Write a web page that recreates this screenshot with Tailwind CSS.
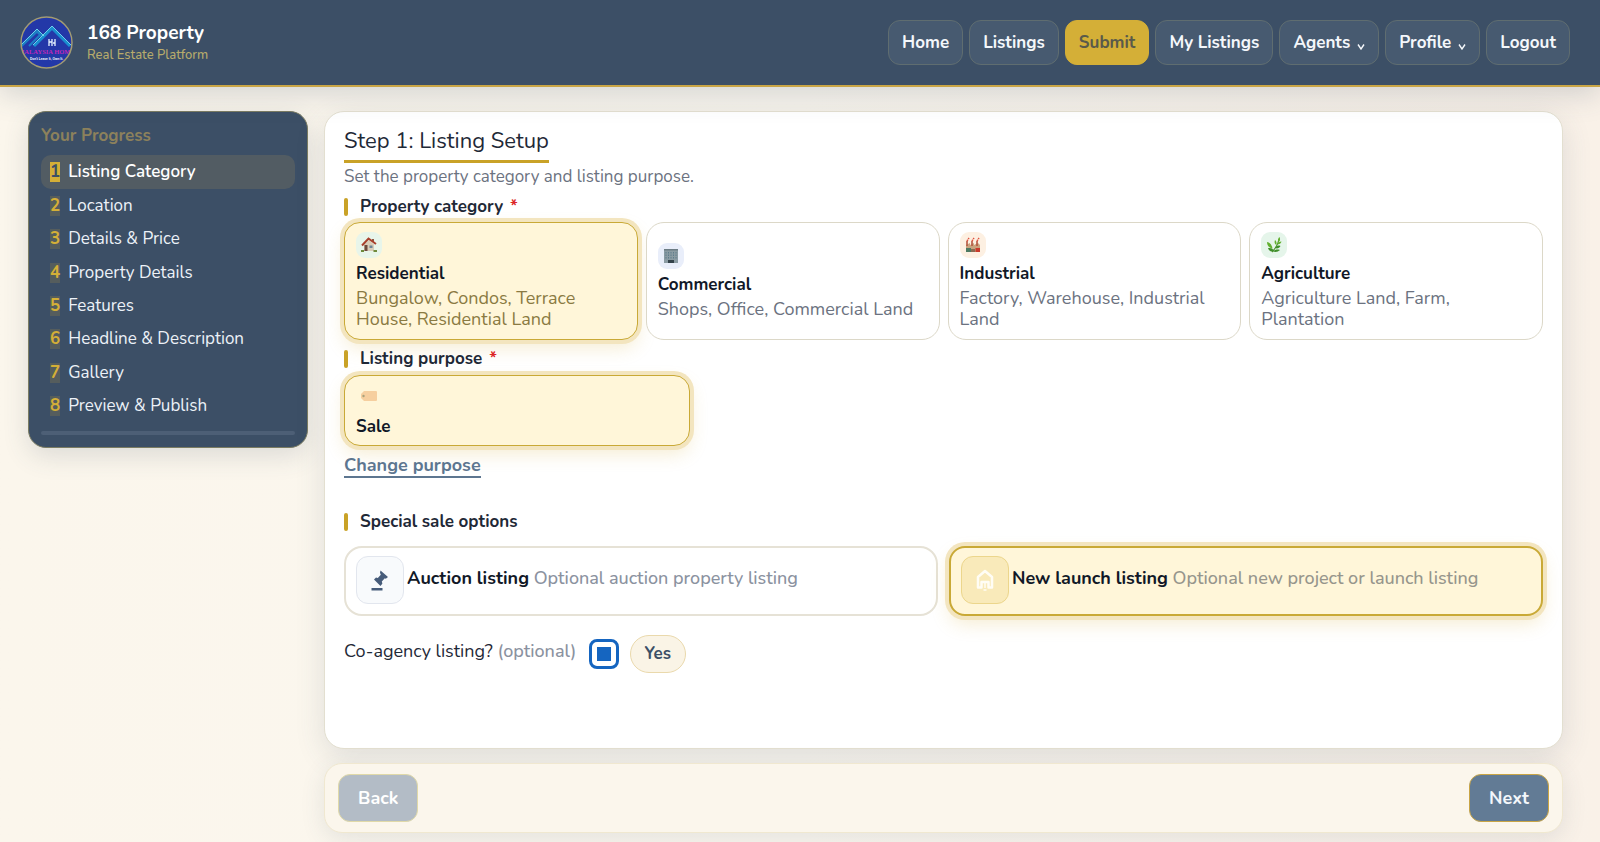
<!DOCTYPE html>
<html lang="en">
  <head>
    <meta charset="UTF-8" />
    <meta name="viewport" content="width=device-width, initial-scale=1.0" />
    <title>Submit Listing - 168 Property</title>
    <script src="https://cdn.jsdelivr.net/npm/@tailwindcss/browser@4"></script>
  </head>
  <body
    class="min-h-screen bg-linear-to-r from-[#fbf6ec] via-[#fbf7ef] to-[#f9f1e8] font-['Nunito',Lato,sans-serif] text-[17px] text-[#1f2937]"
  >
    <!-- Top bar -->
    <header
      class="relative flex items-center justify-between border-b-2 border-[#c9a545] bg-[#3c4f66] py-4 pr-[30px] pl-5 shadow-[0_6px_28px_rgba(60,79,102,0.22)]"
    >
      <a href="#" class="flex items-center gap-[14px]">
        <svg class="size-[53px]" viewBox="0 0 53 53" aria-hidden="true">
          <defs>
            <clipPath id="logo-clip"><circle cx="26.5" cy="26.5" r="25.5" /></clipPath>
          </defs>
          <circle cx="26.5" cy="26.5" r="26" fill="#2338a8" />
          <g clip-path="url(#logo-clip)" fill="none">
            <path d="M1 30 17 15l5 5" stroke="#1d7fc4" stroke-width="3" />
            <path d="M9 30 20 19" stroke="#1d7fc4" stroke-width="2" />
            <path d="M14 30 32 12l18 18" stroke="#1a8fd0" stroke-width="3" />
            <path d="M1 29 17 13l7 7M13 29 32 10l19 19" stroke="#6fd0ea" stroke-width="1" />
            <path d="M29 23v7M32 23v7M29 26h3M35 23v7M35 27h-2" stroke="#e6f4ff" stroke-width="1.3" />
            <text x="26.5" y="38" text-anchor="middle" font-family="Liberation Serif, serif" font-size="6.5" font-weight="700" fill="#c026b8">MALAYSIA HOME</text>
            <text x="26.5" y="44" text-anchor="middle" font-family="Liberation Sans, sans-serif" font-size="3.2" font-weight="700" fill="#fff">Don't Leave It, Own It.</text>
          </g>
          <circle cx="26.5" cy="26.5" r="25.5" fill="none" stroke="#a39c70" stroke-width="1.5" />
        </svg>
        <span class="flex flex-col">
          <span class="text-[19px] leading-6 font-bold text-white">168 Property</span>
          <span class="text-[13px] leading-5 font-medium text-[#b7ab6c]">Real Estate Platform</span>
        </span>
      </a>
      <nav class="flex gap-[6px] text-[17px] leading-[21px] font-bold text-[#f4f7fb]">
        <a href="#" class="rounded-xl border border-[#5f6d70] bg-[#475a70] px-[13px] py-[11px]">Home</a>
        <a href="#" class="rounded-xl border border-[#5f6d70] bg-[#475a70] px-[13px] py-[11px]">Listings</a>
        <a href="#" class="rounded-xl border border-[#d4af37] bg-[#d4af37] px-[13px] py-[11px] text-[#5a5a4a]">Submit</a>
        <a href="#" class="rounded-xl border border-[#5f6d70] bg-[#475a70] px-[13px] py-[11px]">My Listings</a>
        <a href="#" class="flex items-center gap-[7px] rounded-xl border border-[#5f6d70] bg-[#475a70] px-[13px] py-[11px]">
          Agents
          <svg class="mt-2 h-[6px] w-2" viewBox="0 0 8 6" fill="none" stroke="currentColor" stroke-width="1.4"><path d="M1 0.500 4 5 7 0.500" /></svg>
        </a>
        <a href="#" class="flex items-center gap-[7px] rounded-xl border border-[#5f6d70] bg-[#475a70] px-[13px] py-[11px]">
          Profile
          <svg class="mt-2 h-[6px] w-2" viewBox="0 0 8 6" fill="none" stroke="currentColor" stroke-width="1.4"><path d="M1 0.500 4 5 7 0.500" /></svg>
        </a>
        <a href="#" class="rounded-xl border border-[#5f6d70] bg-[#475a70] px-[13px] py-[11px]">Logout</a>
      </nav>
    </header>

    <div class="flex items-start gap-4 pt-6 pr-[37px] pb-2 pl-7">
      <!-- Progress -->
      <aside
        class="w-[280px] shrink-0 rounded-[18px] border border-[#7b7c62] bg-[#3c4f66] px-3 pt-3 pb-3 shadow-[0_8px_26px_rgba(60,79,102,0.16)]"
      >
        <h2 class="mb-[7px] leading-6 font-bold text-[#8c815c]">Your Progress</h2>
        <ol class="text-[#edf2f8]">
          <li class="flex h-[34px] items-center gap-2 rounded-[10px] bg-[#525c63] px-[9px] font-semibold text-white"><span class="bg-[#d4af37] leading-5 font-bold text-[#3c4f66]">1</span>Listing Category</li>
          <li class="flex h-[33px] items-center gap-2 px-[9px]"><span class="bg-[#555d5d] leading-5 font-bold text-[#d4af37]">2</span>Location</li>
          <li class="flex h-[34px] items-center gap-2 px-[9px]"><span class="bg-[#555d5d] leading-5 font-bold text-[#d4af37]">3</span>Details &amp; Price</li>
          <li class="flex h-[33px] items-center gap-2 px-[9px]"><span class="bg-[#555d5d] leading-5 font-bold text-[#d4af37]">4</span>Property Details</li>
          <li class="flex h-[33px] items-center gap-2 px-[9px]"><span class="bg-[#555d5d] leading-5 font-bold text-[#d4af37]">5</span>Features</li>
          <li class="flex h-[34px] items-center gap-2 px-[9px]"><span class="bg-[#555d5d] leading-5 font-bold text-[#d4af37]">6</span>Headline &amp; Description</li>
          <li class="flex h-[33px] items-center gap-2 px-[9px]"><span class="bg-[#555d5d] leading-5 font-bold text-[#d4af37]">7</span>Gallery</li>
          <li class="flex h-[33px] items-center gap-2 px-[9px]"><span class="bg-[#555d5d] leading-5 font-bold text-[#d4af37]">8</span>Preview &amp; Publish</li>
        </ol>
        <div class="mt-[9px] h-1 rounded-full bg-[#4d5f76]"></div>
      </aside>

      <main class="min-w-0 flex-1">
        <!-- Step 1 -->
        <section
          class="rounded-[20px] border border-[#e3dfd0] bg-white px-[19px] pt-[14px] pb-[75px] shadow-[0_8px_30px_rgba(60,79,102,0.14)]"
        >
          <h1 class="w-fit border-b-[3px] border-[#c9a227] pb-[3px] text-[22px] leading-[31px]">Step 1: Listing Setup</h1>
          <p class="mt-[2px] leading-6 text-[#6b7280]">Set the property category and listing purpose.</p>

          <h2 class="mt-[9px] flex h-[18px] items-center font-bold">
            <span class="mr-3 h-full w-1 rounded-[2px] bg-[#c9a227]"></span>Property category<span class="ml-[7px] text-[#dc2626]">*</span>
          </h2>
          <div class="mt-[6px] grid grid-cols-4 gap-2">
            <button
              type="button"
              class="min-h-[118px] rounded-2xl border border-[#c9a936] bg-[#fff6d9] px-[11px] py-2 text-left shadow-[0_0_0_4px_#f3e5bf,0_8px_18px_rgba(212,175,55,0.22)]"
            >
              <span class="flex size-[26px] items-center justify-center rounded-[9px] bg-[#e8f5ea]">
                <svg class="size-4" viewBox="0 0 16 16"><path d="M3 7.500 8 3l5 4.500V14H3z" fill="#d9cdb8" /><path d="M3.500 8h3v6h-3z" fill="#6d4a3c" /><path d="M8.500 8.500h3V11h-3z" fill="#6e8797" /><path d="M11 2h2v4l-2-2z" fill="#8a5a44" /><path d="M1 8.500 7.500 1.500 15 7" fill="none" stroke="#a8402c" stroke-width="2" /><path d="M0 13h3v2H0zM12.500 13H16v2h-3.500z" fill="#6f8a3c" /></svg>
              </span>
              <span class="mt-1 block leading-[23px] font-bold text-[#111827]">Residential</span>
              <span class="mt-[3px] block text-[18px] leading-[21px] text-[#8a7a42]">Bungalow, Condos, Terrace House, Residential Land</span>
            </button>
            <button type="button" class="min-h-[118px] rounded-[18px] border border-[#dcd8c8] bg-white px-[11px] py-2 text-left">
              <span class="flex size-[26px] items-center justify-center rounded-[9px] bg-[#e9eefa]">
                <svg class="size-4" viewBox="0 0 16 16"><path d="M1 1h14v14H1z" fill="#8a9ba3" /><path d="M1 1h14v1.500H1z" fill="#6c7c84" /><path d="M3 4v7M5.500 4v7M8 4v7M10.500 4v7M13 4v7" stroke="#5f7d8c" stroke-width="1" stroke-dasharray="1.500 1" /><path d="M5 12h6v3H5z" fill="#33424a" /></svg>
              </span>
              <span class="mt-1 block leading-[23px] font-bold text-[#111827]">Commercial</span>
              <span class="mt-[3px] block text-[18px] leading-[21px] text-[#6b7280]">Shops, Office, Commercial Land</span>
            </button>
            <button type="button" class="min-h-[118px] rounded-[18px] border border-[#dcd8c8] bg-white px-[11px] py-2 text-left">
              <span class="flex size-[26px] items-center justify-center rounded-[9px] bg-[#fdf0e2]">
                <svg class="size-4" viewBox="0 0 16 16"><path d="M1 8l4-2v2l4-2v2l4-2 2 2v7H1z" fill="#c9a27e" /><path d="M2 9V4M7 9V4M12 9V4" stroke="#b5563f" stroke-width="1.600" /><path d="M2 4 4 1M7 4l2-3M12 4l2-3" stroke="#e0523f" stroke-width="1.500" stroke-dasharray="1.500 .8" /><path d="M1 11h5v4H1z" fill="#4d7a62" /><path d="M6 12h4v3H6z" fill="#8b6a52" /><path d="M10.500 11H15v4h-4.500z" fill="#c93a2c" /></svg>
              </span>
              <span class="mt-1 block leading-[23px] font-bold text-[#111827]">Industrial</span>
              <span class="mt-[3px] block text-[18px] leading-[21px] text-[#6b7280]">Factory, Warehouse, Industrial Land</span>
            </button>
            <button type="button" class="min-h-[118px] rounded-[18px] border border-[#dcd8c8] bg-white px-[11px] py-2 text-left">
              <span class="flex size-[26px] items-center justify-center rounded-[9px] bg-[#e5f5ea]">
                <svg class="size-4" viewBox="0 0 16 16"><path d="M6 15C9 12 12 7 13 2" fill="none" stroke="#4d8f2c" stroke-width="1.200" /><g fill="#62b02f"><path d="M13.500 0c1 2 .8 4-1 5-1-2-.5-4 1-5z" /><path d="M15.500 4.500c-.5 2-2 3-4.500 3 .5-2 2-3 4.500-3z" /><path d="M9 3c1.500 1.200 2 3 1.200 5C8.500 7 8.200 5 9 3z" /><path d="M1 5c3 .5 5 3 5.500 6.500C3 11 1 8.500 1 5z" /></g><g fill="#3f8f2a"><path d="M14.500 9c-1 2-3 3-5.500 2 1-2 3-3 5.500-2z" /><path d="M2 11c3-.5 5 .5 6 3-3 1.200-5 .2-6-3z" /><path d="M14 13c-2 2-4.500 2.500-7 1.500C9 12.500 11.500 12 14 13z" /></g></svg>
              </span>
              <span class="mt-1 block leading-[23px] font-bold text-[#111827]">Agriculture</span>
              <span class="mt-[3px] block text-[18px] leading-[21px] text-[#6b7280]">Agriculture Land, Farm, Plantation</span>
            </button>
          </div>

          <h2 class="mt-[10px] flex h-[18px] items-center font-bold">
            <span class="mr-3 h-full w-1 rounded-[2px] bg-[#c9a227]"></span>Listing purpose<span class="ml-[7px] text-[#dc2626]">*</span>
          </h2>
          <button
            type="button"
            class="mt-[7px] block w-[346px] rounded-2xl border border-[#c9a936] bg-[#fff6d9] px-[11px] py-[7px] text-left shadow-[0_0_0_4px_#f3e5bf,0_8px_18px_rgba(212,175,55,0.22)]"
          >
            <span class="flex size-[26px] items-center justify-center">
              <svg class="h-[10px] w-4" viewBox="0 0 16 10"><path d="M3 0h12q1 0 1 1v8q0 1-1 1H3L0 7V3z" fill="#f6cf9f" /><circle cx="2.500" cy="5" r="1.200" fill="#a9a27c" /></svg>
            </span>
            <span class="mt-[6px] block leading-[23px] font-bold text-[#111827]">Sale</span>
          </button>
          <a href="#" class="mt-[9px] block w-fit border-b-2 border-[#5d7690] text-[18px] leading-[21px] font-bold text-[#5d7690]">Change purpose</a>

          <h2 class="mt-[35px] flex h-[18px] items-center font-bold">
            <span class="mr-3 h-full w-1 rounded-[2px] bg-[#c9a227]"></span>Special sale options
          </h2>
          <div class="mt-[15px] grid grid-cols-2 gap-[11px]">
            <button type="button" class="flex h-[70px] items-start gap-[3px] rounded-[18px] border-2 border-[#e6e2d6] bg-white px-[10px] pt-2 text-left">
              <span class="flex size-12 items-center justify-center rounded-xl border border-[#e2e6ee] bg-[#f8fafc]">
                <svg class="size-6" viewBox="0 0 24 24" fill="#475c7a"><path d="M12.500 2.500 20 9l-2.200 1.800-1-.6-3 3.300.6 2L12.500 18 6 11.500l2-2 1.800.5 3-3.200-.8-2z" /><path d="M3.500 20h11v2.500h-11z" /></svg>
              </span>
              <span class="mt-[11px] text-[18px] leading-[22px]"><span class="font-bold text-[#111827]">Auction listing</span> <span class="font-medium text-[#8b92a0]">Optional auction property listing</span></span>
            </button>
            <button
              type="button"
              class="flex h-[70px] items-start gap-[3px] rounded-2xl border-2 border-[#c9a936] bg-[#fff6d9] px-[10px] pt-2 text-left shadow-[0_0_0_4px_#f3e5bf,0_8px_18px_rgba(212,175,55,0.22)]"
            >
              <span class="flex size-12 items-center justify-center rounded-xl border border-[#ecd68c] bg-[#f9eaba]">
                <svg class="size-6" viewBox="0 0 24 24" fill="none" stroke="#fffdf5" stroke-width="2.500" stroke-linejoin="round"><path d="M5 19.500V9l7-6 7 6v10.500h-3.500V14h-7v5.500z" /><path d="M12 15v5M10.500 22h3" stroke-width="1.500" /></svg>
              </span>
              <span class="mt-[11px] text-[18px] leading-[22px]"><span class="font-bold text-[#111827]">New launch listing</span> <span class="font-medium text-[#96958c]">Optional new project or launch listing</span></span>
            </button>
          </div>

          <div class="mt-[19px] flex items-center">
            <label for="co-agency" class="pb-[6px] text-[18px] leading-6">Co-agency listing? <span class="font-medium text-[#8b92a0]">(optional)</span></label>
            <input
              type="checkbox"
              id="co-agency"
              checked
              class="ml-3 size-[30px] appearance-none rounded-lg border-[3px] border-[#1565c0] bg-white bg-clip-content p-[5px] checked:bg-[#1565c0]"
            />
            <label for="co-agency" class="ml-[11px] rounded-full border border-[#ead9ac] bg-[#faf4e6] px-[14px] py-[7px] text-[17px] leading-[22px] font-bold text-[#3c4f66]">Yes</label>
          </div>
        </section>

        <!-- Form actions -->
        <div
          class="mt-[14px] flex items-center justify-between rounded-[18px] border border-[#f0e8d0] bg-[#fbf6ec] px-[13px] py-[10px] shadow-[0_6px_24px_rgba(60,79,102,0.12)]"
        >
          <button type="button" disabled class="h-12 rounded-xl border border-[#e0d9a8] bg-[#b3bcc6] px-[19px] text-[18px] font-bold text-white">Back</button>
          <button type="button" class="h-12 rounded-xl border border-[#c9a545] bg-[#627b95] px-[19px] text-[18px] font-bold text-[#f4f7fb]">Next</button>
        </div>
      </main>
    </div>
  </body>
</html>
